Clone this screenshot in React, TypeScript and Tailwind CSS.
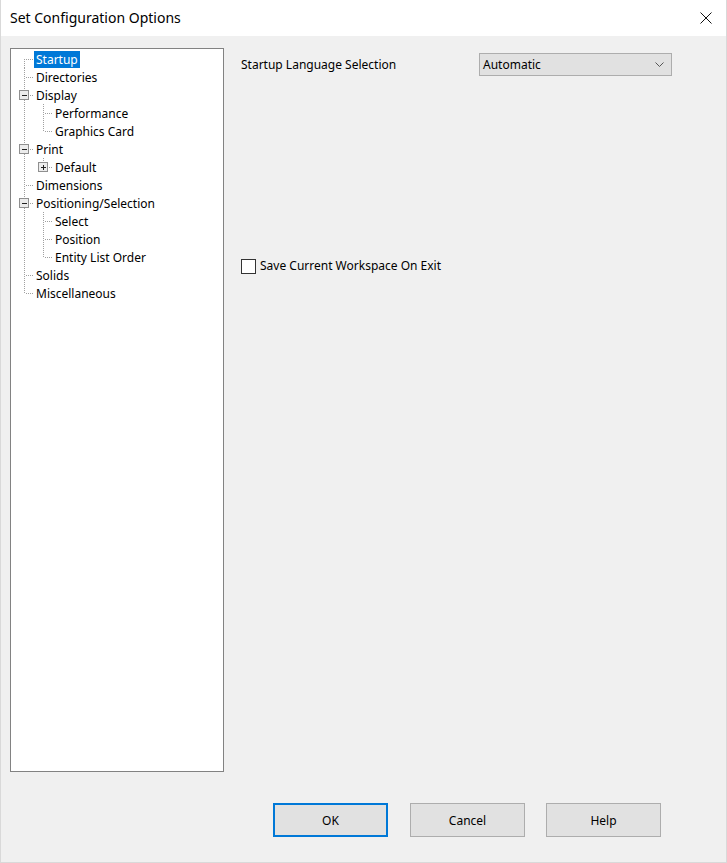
import React from "react";

type TreeRow = {
  label: string;
  level: 0 | 1;
  box?: "minus" | "plus";
  first?: boolean;
  last?: boolean;
  lastChild?: boolean;
  selected?: boolean;
};

const ROWS: TreeRow[] = [
  { label: "Startup", level: 0, first: true, selected: true },
  { label: "Directories", level: 0 },
  { label: "Display", level: 0, box: "minus" },
  { label: "Performance", level: 1 },
  { label: "Graphics Card", level: 1, lastChild: true },
  { label: "Print", level: 0, box: "minus" },
  { label: "Default", level: 1, box: "plus", lastChild: true },
  { label: "Dimensions", level: 0 },
  { label: "Positioning/Selection", level: 0, box: "minus" },
  { label: "Select", level: 1 },
  { label: "Position", level: 1 },
  { label: "Entity List Order", level: 1, lastChild: true },
  { label: "Solids", level: 0 },
  { label: "Miscellaneous", level: 0, last: true },
];

const DOT = "#a0a0a0";

function ExpandBox({ cx, kind }: { cx: number; kind: "minus" | "plus" }) {
  return (
    <g shapeRendering="crispEdges">
      <rect x={cx - 4.5} y={4.5} width={9} height={9} fill="#ececec" stroke="#8f8f8f" />
      <line x1={cx - 2} y1={9.5} x2={cx + 3} y2={9.5} stroke="#222" />
      {kind === "plus" && <line x1={cx + 0.5} y1={7} x2={cx + 0.5} y2={12} stroke="#222" />}
    </g>
  );
}

function Gutter({ row }: { row: TreeRow }) {
  const width = row.level === 0 ? 23 : 42;
  const c0 = 13.5;
  const c1 = 32.5;
  const dash = { stroke: DOT, strokeDasharray: "1 1", shapeRendering: "crispEdges" as const };

  return (
    <svg width={width} height={18} className="shrink-0">
      {/* root column */}
      {row.level === 0 ? (
        <>
          <line x1={c0} y1={row.first ? 9 : 0} x2={c0} y2={row.last ? 10 : 18} {...dash} />
          <line x1={row.box ? c0 + 5 : c0 + 1} y1={9.5} x2={width} y2={9.5} {...dash} />
          {row.box && <ExpandBox cx={c0 - 0.5} kind={row.box} />}
        </>
      ) : (
        <>
          <line x1={c0} y1={0} x2={c0} y2={18} {...dash} />
          <line x1={c1} y1={0} x2={c1} y2={row.lastChild ? 10 : 18} {...dash} />
          <line x1={row.box ? c1 + 5 : c1 + 1} y1={9.5} x2={width} y2={9.5} {...dash} />
          {row.box && <ExpandBox cx={c1 - 0.5} kind={row.box} />}
        </>
      )}
    </svg>
  );
}

function DialogButton({ label, primary }: { label: string; primary?: boolean }) {
  return (
    <button
      className={`flex h-[34px] w-[115px] items-center justify-center bg-[#e1e1e1] pt-[1px] text-[12px] text-black ${
        primary ? "border-2 border-[#0078d7]" : "border border-[#adadad]"
      }`}
    >
      {label}
    </button>
  );
}

export default function App() {
  return (
    <div
      className="flex h-[863px] w-[727px] flex-col border-x border-b border-[#d9d9d9] bg-[#f0f0f0] text-black"
      style={{ fontFamily: '"Noto Sans", "Open Sans", sans-serif' }}
    >
      <header className="flex h-[36px] shrink-0 items-center justify-between bg-white pl-[9px] pr-[14px]">
        <span className="text-[14px] leading-none">Set Configuration Options</span>
        <svg width="12" height="12" viewBox="0 0 12 12">
          <path d="M0.5 0.5 L11.5 11.5 M11.5 0.5 L0.5 11.5" stroke="#111" strokeWidth="1" />
        </svg>
      </header>

      <div className="flex pl-[9px] pt-[12px]">
        <div className="h-[724px] w-[214px] shrink-0 border border-[#828282] bg-white pt-[1px]">
          {ROWS.map((row) => (
            <div key={row.label} className="flex h-[18px] items-center">
              <Gutter row={row} />
              <span
                className={`whitespace-nowrap px-[2px] text-[12px] leading-[17px] ${
                  row.selected ? "bg-[#0078d7] text-white" : ""
                }`}
              >
                {row.label}
              </span>
            </div>
          ))}
        </div>

        <div className="ml-[17px] flex flex-col pt-[5px]">
          <div className="flex items-center">
            <span className="w-[238px] text-[12px]">Startup Language Selection</span>
            <div className="flex h-[23px] w-[193px] items-center justify-between border border-[#adadad] bg-[#e1e1e1] pl-[3px] pr-[7px] text-[12px]">
              <span>Automatic</span>
              <svg width="9" height="5" viewBox="0 0 9 5">
                <path d="M0.5 0.5 L4.5 4.5 L8.5 0.5" fill="none" stroke="#555" />
              </svg>
            </div>
          </div>

          <label className="mt-[181px] flex h-[18px] items-center gap-[4px] text-[12px]">
            <span className="h-[15px] w-[15px] border border-[#333] bg-white" />
            Save Current Workspace On Exit
          </label>
        </div>
      </div>

      <div className="mt-[31px] flex pl-[272px]">
        <DialogButton label="OK" primary />
        <div className="ml-[22px]">
          <DialogButton label="Cancel" />
        </div>
        <div className="ml-[21px]">
          <DialogButton label="Help" />
        </div>
      </div>
    </div>
  );
}
